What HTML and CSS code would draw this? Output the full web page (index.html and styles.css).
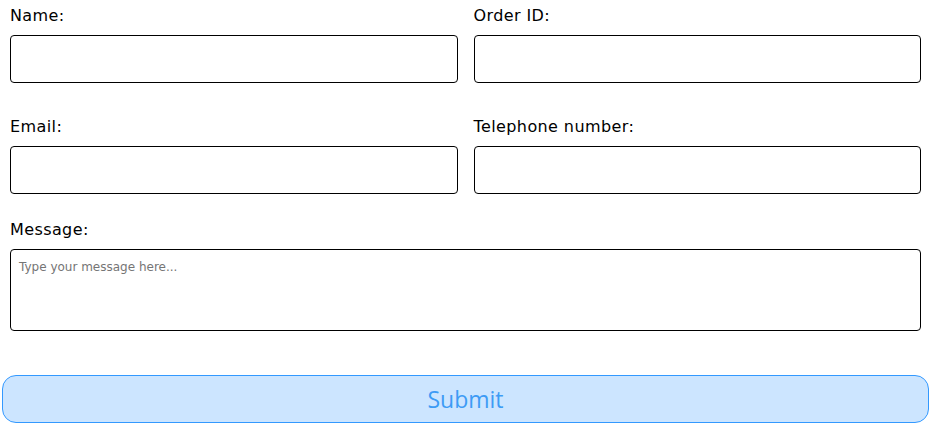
FILE: index.html
```html
<!DOCTYPE html>
<html lang="en">
<head>
<meta charset="utf-8">
<title>Contact form</title>
<link rel="stylesheet" href="styles.css">
</head>
<body>
<form class="contact-form">
  <div class="row">
    <div class="field">
      <label class="label" for="name">Name:</label>
      <input class="input" id="name" type="text">
    </div>
    <div class="field">
      <label class="label" for="order">Order ID:</label>
      <input class="input" id="order" type="text">
    </div>
  </div>
  <div class="row row-second">
    <div class="field">
      <label class="label" for="email">Email:</label>
      <input class="input" id="email" type="email">
    </div>
    <div class="field">
      <label class="label" for="tel">Telephone number:</label>
      <input class="input" id="tel" type="tel">
    </div>
  </div>
  <div class="field field-message">
    <label class="label" for="msg">Message:</label>
    <textarea class="textarea" id="msg" placeholder="Type your message here..."></textarea>
  </div>
  <button class="submit" type="submit">Submit</button>
</form>
</body>
</html>
```
FILE: styles.css
```css
html, body {
  margin: 0;
  padding: 0;
  background: #ffffff;
}

.contact-form {
  box-sizing: border-box;
  width: 933px;
  padding: 6px 12px 0 10px;
  display: flex;
  flex-direction: column;
  font-family: "DejaVu Sans", sans-serif;
  color: #000000;
}

.row {
  display: grid;
  grid-template-columns: 1fr 1fr;
  column-gap: 16px;
  margin-bottom: 34px;
}

.row-second {
  margin-bottom: 26px;
}

.field {
  display: flex;
  flex-direction: column;
  min-width: 0;
}

.label {
  font-size: 16px;
  line-height: 20px;
  letter-spacing: 0.4px;
  margin-bottom: 9px;
}

.input {
  box-sizing: border-box;
  height: 48px;
  width: 100%;
  margin: 0;
  border: 1px solid #000000;
  border-radius: 4px;
  padding: 0 8px;
  font-family: "DejaVu Sans", sans-serif;
  font-size: 14px;
  background: #ffffff;
}

.textarea {
  box-sizing: border-box;
  height: 82px;
  width: 100%;
  margin: 0;
  border: 1px solid #000000;
  border-radius: 4px;
  padding: 10px 8px;
  font-family: "DejaVu Sans", sans-serif;
  font-size: 12px;
  line-height: 14px;
  resize: none;
  background: #ffffff;
}

.textarea::placeholder {
  color: #757575;
}

.submit {
  box-sizing: border-box;
  margin: 44px -8px 0 -8px;
  height: 48px;
  border: 1px solid #3399ff;
  border-radius: 14px;
  background: #cce5ff;
  color: #3d9bf5;
  font-family: "Open Sans", sans-serif;
  font-size: 23px;
  padding: 0;
  cursor: pointer;
}
```
